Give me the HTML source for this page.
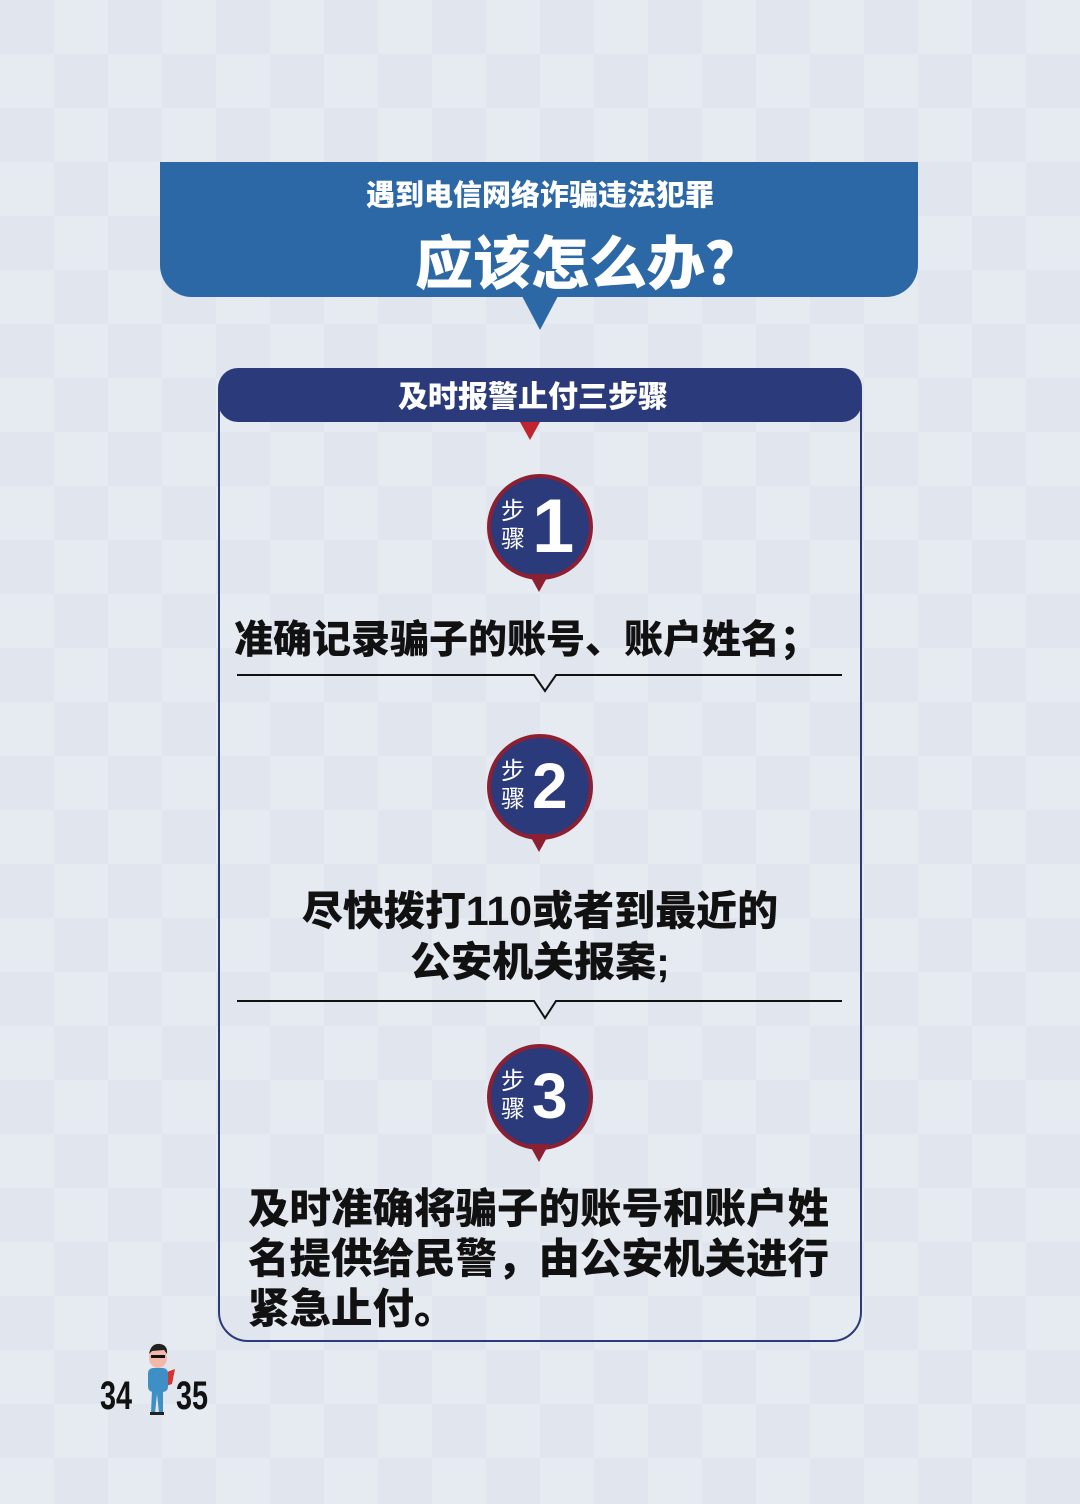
<!DOCTYPE html><html><head><meta charset="utf-8"><style>
body{margin:0;width:1080px;height:1504px;position:relative;overflow:hidden;font-family:"Liberation Sans","Noto Sans CJK SC",sans-serif;
background-color:#e1e5ee;background-image:linear-gradient(45deg,rgba(255,255,255,.18) 25%,transparent 25%,transparent 75%,rgba(255,255,255,.18) 75%),linear-gradient(45deg,rgba(255,255,255,.18) 25%,transparent 25%,transparent 75%,rgba(255,255,255,.18) 75%);background-size:108px 108px;background-position:0 0,54px 54px;}
.a{position:absolute}
.t{font-weight:900;color:#111;white-space:nowrap}
</style></head><body>
<div class="a" style="left:160px;top:162px;width:758px;height:135px;background:#2b68a5;border-radius:0 0 32px 32px"></div>
<div class="a" style="left:522px;top:296px;width:0;height:0;border-left:18px solid transparent;border-right:18px solid transparent;border-top:34px solid #2b68a5"></div>
<div class="a t" style="left:0;width:1080px;top:176px;text-align:center;color:#fff;font-size:29px;line-height:40px">遇到电信网络诈骗违法犯罪</div>
<div class="a t" style="left:415px;top:228px;color:#fff;font-size:58px;line-height:74px">应该怎么办？</div>
<div class="a" style="left:218px;top:370px;width:640px;height:968px;border:2px solid #2b3a7a;border-radius:30px"></div>
<div class="a" style="left:218px;top:368px;width:644px;height:54px;background:#2b3a7a;border-radius:20px"></div>
<div class="a t" style="left:0;width:1066px;top:378px;text-align:center;color:#fff;font-size:30px;line-height:40px">及时报警止付三步骤</div>
<div class="a" style="left:520px;top:422px;border-left:10px solid transparent;border-right:10px solid transparent;border-top:18px solid #c0242f"></div>

<div class="a" style="left:487px;top:474px;width:98px;height:98px;border-radius:50%;background:#2b3a7a;border:4px solid #8d1f33"></div>
<div class="a" style="left:529px;top:574px;border-left:10px solid transparent;border-right:10px solid transparent;border-top:18px solid #8d1f33"></div>
<div class="a" style="left:501px;top:498px;color:#fff;font-size:24px;line-height:28px">步<br>骤</div>
<div class="a" style="left:532px;top:484px;color:#fff;font-size:76px;font-weight:bold;line-height:86px">1</div>

<div class="a" style="left:487px;top:734px;width:98px;height:98px;border-radius:50%;background:#2b3a7a;border:4px solid #8d1f33"></div>
<div class="a" style="left:529px;top:834px;border-left:10px solid transparent;border-right:10px solid transparent;border-top:18px solid #8d1f33"></div>
<div class="a" style="left:501px;top:758px;color:#fff;font-size:24px;line-height:28px">步<br>骤</div>
<div class="a" style="left:532px;top:746px;color:#fff;font-size:64px;font-weight:bold;line-height:80px">2</div>

<div class="a" style="left:487px;top:1044px;width:98px;height:98px;border-radius:50%;background:#2b3a7a;border:4px solid #8d1f33"></div>
<div class="a" style="left:529px;top:1144px;border-left:10px solid transparent;border-right:10px solid transparent;border-top:18px solid #8d1f33"></div>
<div class="a" style="left:501px;top:1068px;color:#fff;font-size:24px;line-height:28px">步<br>骤</div>
<div class="a" style="left:532px;top:1056px;color:#fff;font-size:64px;font-weight:bold;line-height:80px">3</div>

<div class="a t" style="left:234px;top:616px;font-size:39px;line-height:50px">准确记录骗子的账号、账户姓名；</div>
<svg class="a" style="left:0;top:0" width="1080" height="1504"><g fill="none" stroke="#111" stroke-width="2">
<polyline points="237,675 534,675 545,691 556,675 842,675"/>
<polyline points="237,1001 534,1001 545,1018 556,1001 842,1001"/></g></svg>
<div class="a t" style="left:0;width:1080px;text-align:center;top:886px;font-size:41px;line-height:51px">尽快拨打110或者到最近的<br>公安机关报案;</div>
<div class="a t" style="left:248px;top:1184px;font-size:41.5px;line-height:50px">及时准确将骗子的账号和账户姓<br>名提供给民警，由公安机关进行<br>紧急止付。</div>

<div class="a" style="left:100px;top:1374px;font-size:40px;font-weight:bold;color:#111;transform:scaleX(.72);transform-origin:left">34</div>
<div class="a" style="left:176px;top:1374px;font-size:40px;font-weight:bold;color:#111;transform:scaleX(.72);transform-origin:left">35</div>
<svg class="a" style="left:138px;top:1338px" width="40" height="80">
<path d="M29 34 L37 31 L34 46 L28 48Z" fill="#d8322f"/>
<rect x="10" y="30" width="20" height="24" rx="5" fill="#3f8fc7"/>
<path d="M14 52 L13 75 L17 75 L19 56 L21 75 L25 75 L25 52Z" fill="#3f8fc7"/>
<rect x="12" y="74" width="14" height="3" fill="#222"/>
<ellipse cx="20" cy="20" rx="9" ry="10" fill="#f2b8a8"/>
<path d="M11 16 Q13 5 22 6 Q30 7 29 16 L26 12 L14 13Z" fill="#222"/>
<rect x="13" y="17" width="14" height="3" fill="#111"/>
</svg>
</body></html>
